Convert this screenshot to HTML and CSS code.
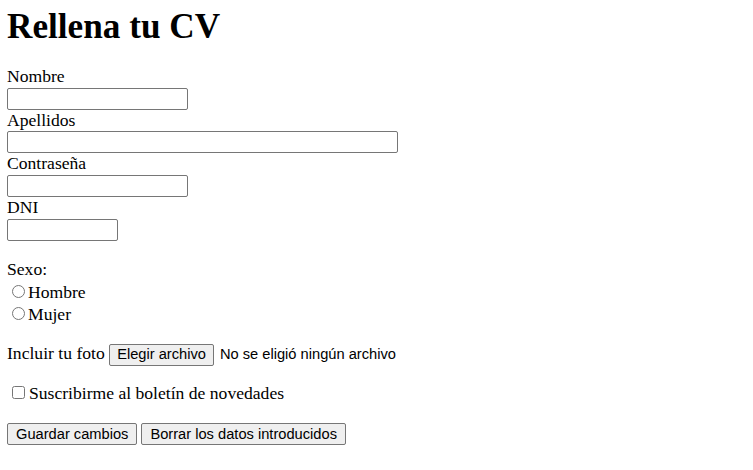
FILE: index.html
```html
<!DOCTYPE html>
<html lang="es">
<head>
<meta charset="utf-8">
<title>Rellena tu CV</title>
<link rel="stylesheet" href="styles.css">
</head>
<body>
<h1 class="title">Rellena tu CV</h1>
<form class="cv-form">
<div class="fields">
<label for="nombre">Nombre</label><br>
<input class="field field-short" type="text" id="nombre"><br>
<label for="apellidos">Apellidos</label><br>
<input class="field field-long" type="text" id="apellidos"><br>
<label for="pass">Contraseña</label><br>
<input class="field field-short" type="password" id="pass"><br>
<label for="dni">DNI</label><br>
<input class="field field-dni" type="text" id="dni">
</div>
<p class="row sexo">Sexo:<br>
<input class="radio" type="radio" name="sexo" id="h"><label for="h">Hombre</label><br>
<input class="radio" type="radio" name="sexo" id="m"><label for="m">Mujer</label></p>
<p class="row">Incluir tu foto <label class="btn file-btn" for="foto">Elegir archivo</label><input class="file-hidden" type="file" id="foto"><span class="file-name">No se eligió ningún archivo</span></p>
<p class="row"><input class="check" type="checkbox" id="s"><label for="s">Suscribirme al boletín de novedades</label></p>
<p class="row"><button class="btn btn-wide" type="submit">Guardar cambios</button><button class="btn btn-wide btn-next" type="reset">Borrar los datos introducidos</button></p>
</form>
</body>
</html>
```
FILE: styles.css
```css
body {
  font-family: "Liberation Serif", "Times New Roman", serif;
  font-size: 17.6px;
  color: #000;
  margin: 7px;
}
.title {
  font-size: 35.2px;
  margin: 0 0 19px;
  line-height: 40px;
}
.cv-form {
  line-height: 21.7px;
}
.field {
  box-sizing: border-box;
  height: 22px;
  border: 1px solid #767676;
  border-radius: 2px;
  padding: 1px 2px;
  margin: 0;
  vertical-align: bottom;
  font: 14.67px "Liberation Sans", Arial, sans-serif;
}
.field-short { width: 181px; }
.field-long { width: 391px; }
.field-dni { width: 111px; }
.sexo {
  line-height: 22.3px;
}
.radio {
  width: 13px;
  height: 13px;
  margin: 3px 3px 0 5px;
  vertical-align: baseline;
}
.check {
  width: 13px;
  height: 13px;
  margin: 3px 4px 0 5px;
  vertical-align: baseline;
}
.row {
  margin: 17.6px 0;
}
.btn {
  display: inline-block;
  box-sizing: border-box;
  height: 22px;
  line-height: 18px;
  padding: 1px 7px;
  border: 1px solid #767676;
  border-radius: 2px;
  background: #efefef;
  color: #000;
  font: 14.67px "Liberation Sans", Arial, sans-serif;
  margin: 0;
  vertical-align: baseline;
}
.btn-wide {
  padding: 1px 8px;
}
.btn-next {
  margin-left: 4px;
}
.file-hidden {
  display: none;
}
.file-name {
  font: 14.67px "Liberation Sans", Arial, sans-serif;
  margin-left: 6px;
}
```
